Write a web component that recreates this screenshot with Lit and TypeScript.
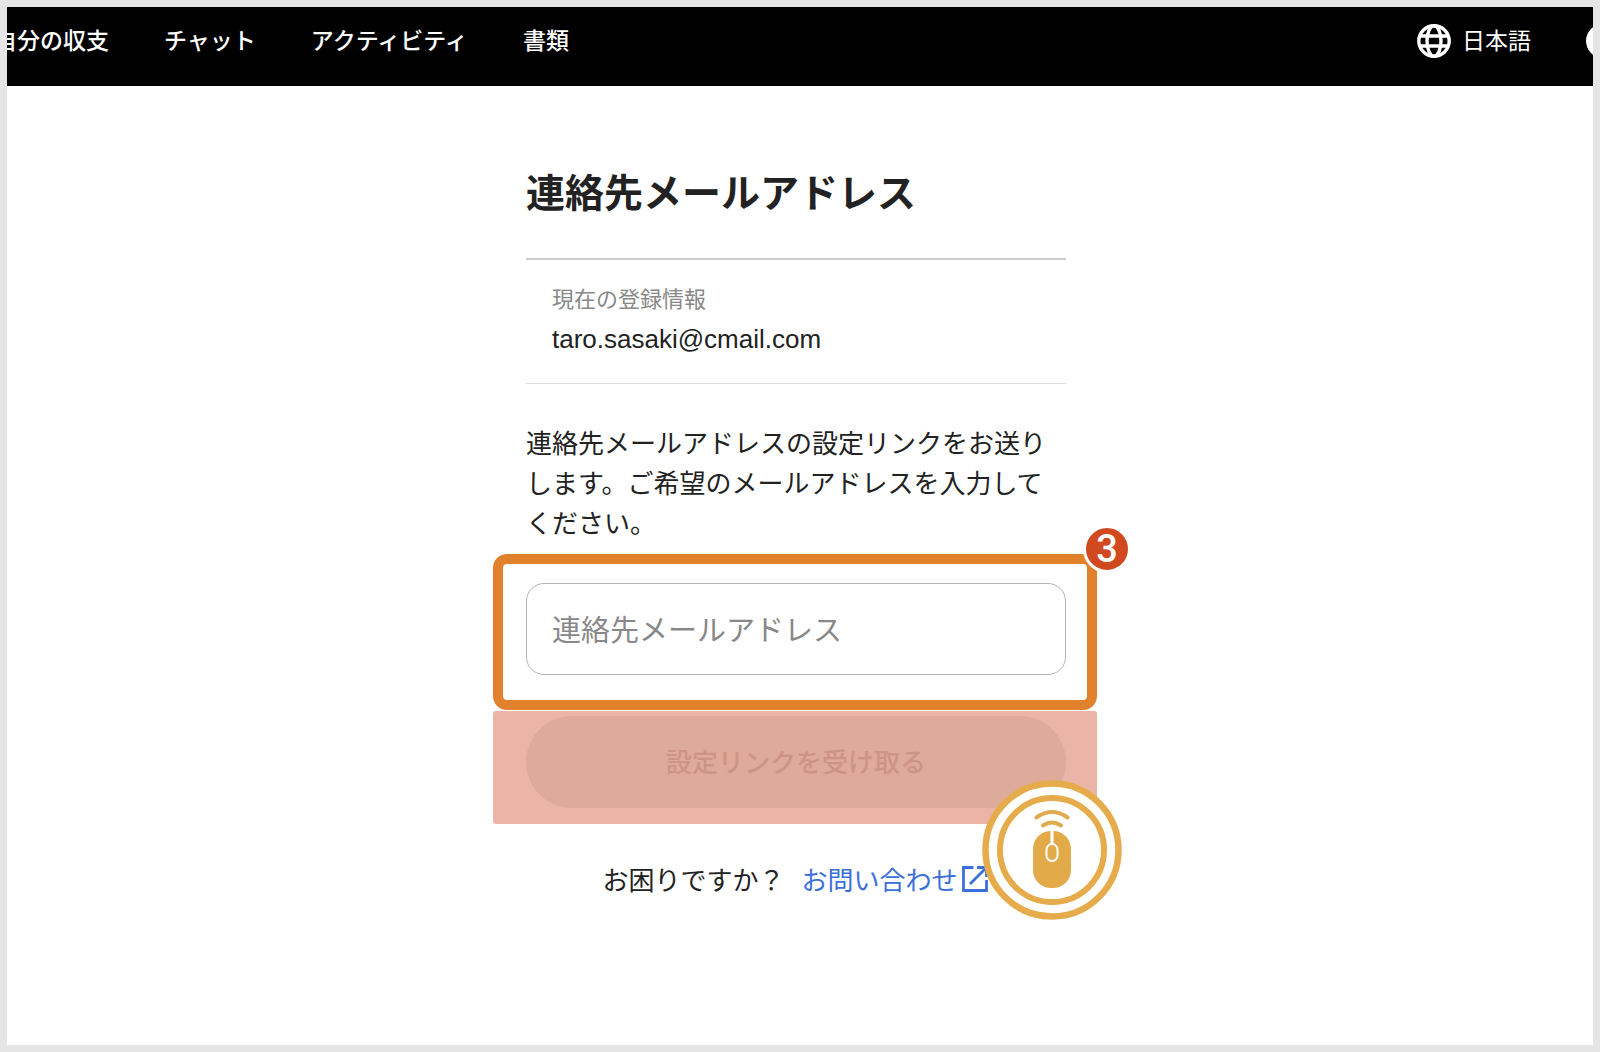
import { LitElement, html, css, svg } from "lit";
import { customElement } from "lit/decorators.js";

const NAV_ITEMS = ["自分の収支", "チャット", "アクティビティ", "書類"];

const globeIcon = svg`
  <svg class="globe" viewBox="0 0 34 34" aria-hidden="true" fill="none" stroke="currentColor" stroke-width="3.4">
    <circle cx="17" cy="17" r="15.2" />
    <ellipse cx="17" cy="17" rx="7" ry="15.2" />
    <path d="M2.5 12h29M2.5 22h29" />
  </svg>`;

const externalIcon = svg`
  <svg class="external" viewBox="0 0 26 26" aria-hidden="true" fill="none" stroke="currentColor" stroke-width="2.8">
    <path d="M11.5 1.5H1.5v23h23V14" />
    <path d="M15 1.500h9.500V11M24 2L8 18" />
  </svg>`;

const mouseIcon = svg`
  <svg class="pointer-svg" viewBox="0 0 140 140" aria-hidden="true" fill="none">
    <circle cx="70" cy="70" r="66.500" fill="#fff" stroke="#e6ab4a" stroke-width="6.500" />
    <circle cx="70" cy="70" r="52" stroke="#e6ab4a" stroke-width="6" />
    <path d="M54.500 37.500Q70 26.500 85.500 37.500M61 45.500Q70 39.500 79 45.500" stroke="#dfab50" stroke-width="4" stroke-linecap="round" />
    <rect x="51" y="51" width="38" height="57" rx="18" fill="#e3aa49" />
    <path d="M70 50v14" stroke="#fff" stroke-width="3" />
    <rect x="64.500" y="64" width="11" height="17" rx="5.500" stroke="#fff" stroke-width="2" />
  </svg>`;

@customElement("app-root")
export class AppRoot extends LitElement {
  static styles = css`
    :host {
      display: block;
      font-family: "Noto Sans CJK JP", "Liberation Sans", sans-serif;
      color: #222;
    }
    .page {
      box-sizing: border-box;
      min-height: 100vh;
      border: 7px solid #e5e5e5;
      background: #fff;
      overflow: hidden;
    }
    .topbar {
      display: flex;
      align-items: flex-start;
      justify-content: space-between;
      box-sizing: border-box;
      height: 79px;
      padding-top: 15px;
      background: #000;
      color: #fff;
      font-size: 23px;
      line-height: 34px;
      white-space: nowrap;
    }
    .nav {
      display: flex;
      gap: 55px;
      margin-left: -13px;
    }
    .nav a {
      color: inherit;
      font-weight: 500;
      text-decoration: none;
    }
    .tools {
      display: flex;
      align-items: flex-start;
      gap: 55px;
      margin-right: -27px;
    }
    button {
      border: 0;
      margin: 0;
      padding: 0;
      font: inherit;
      color: inherit;
      background: none;
    }
    .language {
      display: flex;
      align-items: flex-start;
      gap: 11px;
    }
    .globe,
    .account {
      width: 34px;
      height: 34px;
      margin-top: 2px;
    }
    .account {
      border-radius: 50%;
      background: #fff;
    }
    .main {
      display: flex;
      justify-content: center;
      padding: 76px 10px 0 0;
    }
    .column {
      width: 604px;
    }
    .intro {
      padding: 0 31px 0 33px;
    }
    h1 {
      margin: 0;
      font-size: 39px;
      line-height: 56px;
      font-weight: 700;
    }
    .current {
      margin: 40px 0 38px;
      padding: 21px 26px 24px;
      border-top: 2px solid #ccc;
      border-bottom: 1px solid #ddd;
    }
    .current dt {
      font-size: 22px;
      line-height: 32px;
      color: #888;
    }
    .current dd {
      margin: 7px 0 0;
      font-family: "Liberation Sans", sans-serif;
      font-size: 26px;
      line-height: 39px;
    }
    .lead {
      margin: 0;
      font-size: 26px;
      line-height: 40px;
    }
    .highlight {
      position: relative;
      margin-top: 12px;
      padding: 19px 21px 25px 23px;
      border: 10px solid #e2812b;
      border-radius: 14px;
    }
    .field {
      display: block;
      box-sizing: border-box;
      width: 100%;
      height: 92px;
      padding: 0 25px 2px;
      border: 1px solid #b4b4b4;
      border-radius: 18px;
      background: #fff;
      color: #222;
      font: inherit;
      font-size: 29px;
    }
    .field::placeholder {
      color: #888;
      opacity: 1;
    }
    .badge {
      position: absolute;
      top: -39px;
      right: -44px;
      width: 42px;
      height: 42px;
      border: 3px solid #fff;
      border-radius: 50%;
      background: #d1491f;
      color: #fff;
      font-family: Roboto, sans-serif;
      font-size: 38px;
      font-weight: 500;
      line-height: 42px;
      text-align: center;
    }
    .action {
      position: relative;
      margin-top: 1px;
      padding: 5px 31px 16px 33px;
      border-radius: 3px;
      background: #eab5a6;
    }
    .submit {
      width: 100%;
      height: 92px;
      padding-bottom: 4px;
      border-radius: 46px;
      background: #deaa9a;
      color: #cd9486;
      font-size: 26px;
      font-weight: 500;
    }
    .pointer {
      position: absolute;
      right: -25px;
      bottom: -96px;
      width: 140px;
      height: 140px;
    }
    .pointer-svg {
      display: block;
      width: 100%;
      height: 100%;
    }
    .help {
      display: flex;
      justify-content: center;
      gap: 17px;
      margin: 35px 0 0;
      font-size: 26px;
      line-height: 39px;
    }
    .help a {
      display: flex;
      align-items: center;
      gap: 4px;
      color: #3a6fdc;
      text-decoration: none;
    }
    .external {
      width: 26px;
      height: 26px;
    }
  `;

  render() {
    return html`
      <div class="page">
        <header class="topbar">
          <nav class="nav">
            ${NAV_ITEMS.map((label) => html`<a href="#">${label}</a>`)}
          </nav>
          <div class="tools">
            <button class="language" type="button">${globeIcon}<span>日本語</span></button>
            <button class="account" type="button"></button>
          </div>
        </header>
        <main class="main">
          <div class="column">
            <div class="intro">
              <h1>連絡先メールアドレス</h1>
              <dl class="current">
                <dt>現在の登録情報</dt>
                <dd>taro.sasaki@cmail.com</dd>
              </dl>
              <p class="lead" id="lead">
                連絡先メールアドレスの設定リンクをお送りします。ご希望のメールアドレスを入力してください。
              </p>
            </div>
            <div class="highlight">
              <input class="field" type="email" placeholder="連絡先メールアドレス" aria-labelledby="lead" />
              <span class="badge">3</span>
            </div>
            <div class="action">
              <button class="submit" type="button">設定リンクを受け取る</button>
              <div class="pointer">${mouseIcon}</div>
            </div>
            <p class="help">
              <span>お困りですか？</span>
              <a href="#">お問い合わせ${externalIcon}</a>
            </p>
          </div>
        </main>
      </div>
    `;
  }
}
